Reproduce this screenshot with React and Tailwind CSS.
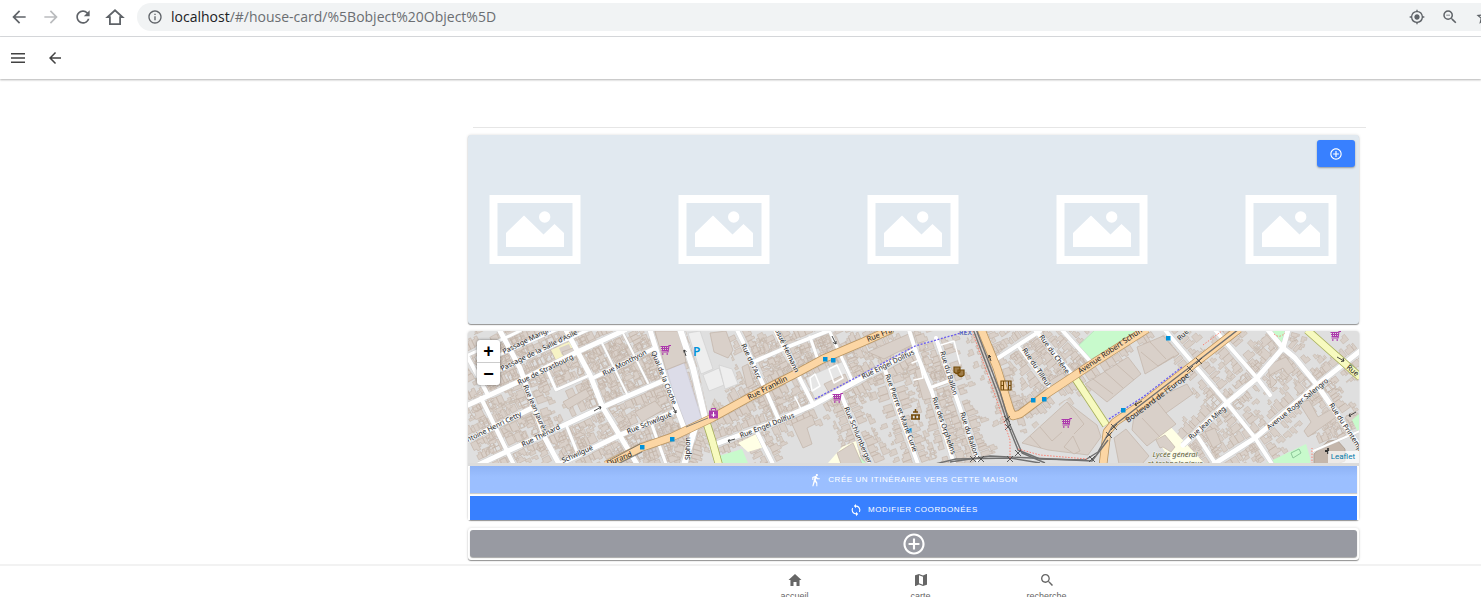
import React from "react";
import {
  MdArrowBack,
  MdArrowForward,
  MdRefresh,
  MdInfoOutline,
  MdGpsFixed,
  MdZoomOut,
  MdStarBorder,
} from "react-icons/md";
import {
  IoMdHome,
  IoMdMap,
  IoMdSearch,
  IoMdWalk,
  IoMdSync,
  IoMdAddCircleOutline,
} from "react-icons/io";

/* Streets: [width, points]. Map units are pixels at the default zoom. */
const STREETS = [
  [5, [[468, 405], [518, 382], [575, 353], [625, 330]]],
  [5, [[499, 329], [520, 368], [545, 438], [559, 464]]],
  [3, [[486, 377], [540, 352], [590, 329]]],
  [3, [[492, 358], [556, 330]]],
  [3, [[466, 356], [520, 331]]],
  [5, [[566, 330], [590, 375], [603, 408], [637, 464]]],
  [4, [[593, 378], [655, 348]]],
  [2, [[602, 343], [627, 394]]],
  [2, [[623, 333], [648, 383]]],
  [5, [[650, 330], [665, 378], [684, 428]]],
  [5, [[478, 465], [508, 451], [558, 428], [605, 406], [665, 380]]],
  [5, [[560, 464], [618, 436], [673, 412]]],
  [5, [[466, 441], [500, 424], [532, 408]]],
  [4, [[481, 398], [508, 453], [514, 465]]],
  [4, [[466, 354], [488, 395]]],
  [3, [[548, 372], [556, 390], [590, 375]]],
  [3, [[567, 427], [577, 452]]],
  [3, [[652, 425], [666, 464]]],
  [6, [[680, 329], [693, 368], [705, 418]]],
  [6, [[695, 428], [684, 465]]],
  [4, [[737, 330], [753, 362], [778, 418]]],
  [4, [[753, 362], [790, 346], [828, 331]]],
  [4, [[775, 330], [797, 373], [813, 404]]],
  [3, [[810, 337], [818, 360]]],
  [3, [[829, 330], [852, 380]]],
  [5, [[713, 445], [767, 425], [813, 405], [857, 381], [915, 350]]],
  [4, [[757, 432], [773, 464]]],
  [4, [[840, 392], [870, 464]]],
  [4, [[885, 370], [900, 415], [918, 464]]],
  [4, [[909, 330], [916, 352], [932, 392], [954, 464]]],
  [4, [[936, 338], [952, 385], [978, 460]]],
  [3, [[932, 387], [951, 380]]],
  [3, [[1018, 346], [1050, 388]]],
  [4, [[1035, 330], [1075, 378]]],
  [4, [[995, 360], [1040, 331]]],
  [4, [[1062, 330], [1090, 361]]],
  [4, [[1165, 330], [1192, 362], [1227, 403], [1255, 438], [1272, 464]]],
  [4, [[1215, 330], [1257, 378], [1270, 395]]],
  [5, [[1183, 445], [1227, 403], [1257, 378], [1283, 348], [1288, 330]]],
  [5, [[1268, 330], [1283, 348], [1295, 358], [1317, 385], [1360, 447]]],
  [5, [[1214, 464], [1255, 438], [1317, 385], [1360, 351]]],
  [4, [[1198, 437], [1215, 463]]],
  [2, [[1313, 451], [1360, 431]]],
];

const PRIMARY = [
  [[606, 465], [640, 448], [672, 437], [712, 418], [750, 397], [797, 373], [823, 359], [863, 342], [892, 329]],
  [[981, 329], [997, 368], [1010, 410], [1013, 416], [1020, 414], [1048, 393], [1095, 362], [1147, 329]],
  [[1103, 465], [1107, 432], [1115, 422], [1145, 402], [1190, 367], [1239, 329]],
];

const SECONDARY = [
  [[706, 421], [712, 440], [719, 465]],
  [[1075, 378], [1106, 425]],
  [[1307, 330], [1360, 377]],
];

const RAILS = [
  [[973, 329], [997, 392], [1008, 425], [1018, 450], [1040, 459], [1085, 460], [1098, 452], [1112, 427], [1143, 403], [1190, 367], [1239, 329]],
  [[976, 329], [1000, 392], [1010, 425], [1022, 453], [1045, 463]],
  [[935, 464], [956, 459], [1010, 458], [1040, 463]],
  [[950, 462], [990, 456], [1092, 461], [1108, 440]],
];

const CROSSINGS = [
  [973, 459], [981, 459], [1010, 459], [1007, 419], [1008, 427],
  [1018, 453], [1092, 459], [1109, 435], [1114, 427], [1190, 369], [1199, 361],
];

const STOPS = [
  [642, 447], [672, 439], [825, 359], [833, 360], [909, 430],
  [1033, 400], [1044, 399], [1123, 410], [1168, 338],
];

const BIG_BUILDINGS = [
  "655,331 680,331 686,362 666,370",
  "562,352 584,344 588,351 566,362",
  "563,402 586,389 590,396 568,409",
  "635,412 655,401 663,410 642,422",
  "710,333 726,331 733,350 728,358 714,352",
  "742,367 748,364 754,384 747,388",
  "792,424 812,415 815,424 807,428 812,444 803,448",
  "824,384 845,374 851,388 832,398",
  "837,453 853,443 862,464 841,464",
  "868,352 913,332 916,343 884,359",
  "915,370 924,367 932,398 923,400",
  "1022,443 1067,402 1097,425 1101,437 1088,455 1048,450",
  "1051,380 1063,373 1070,382 1040,402 1036,397",
  "1085,384 1128,357 1141,374 1107,402",
  "1137,347 1163,336 1179,354 1145,374",
  "1135,408 1187,384 1193,394 1166,413 1176,424 1147,446 1132,430",
  "1114,438 1126,429 1149,456 1142,464 1119,464",
  "1268,365 1286,357 1295,370 1288,375 1283,368 1270,375 1277,382 1271,388",
  "1299,403 1309,400 1318,417 1335,407 1339,415 1308,437 1304,431 1311,422",
  "1205,432 1215,428 1221,443 1213,448",
];

const DARK_BUILDINGS = ["1314,454 1328,441 1337,440 1345,449 1345,461 1337,464 1314,464"];

/* [text, x, y, angle] */
const LABELS = [
  ["Rue de Strasbourg", 519, 385, -26],
  ["Passage Marignan", 504, 354, -26],
  ["Passage de la Salle d'Asile", 502, 371, -26],
  ["Rue Jean Jaurès", 523, 386, 67],
  ["Rue Monthyon", 604, 376, -27],
  ["Antoine Henri Cetty", 464, 444, -26],
  ["Rue Thénard", 523, 447, -26],
  ["Rue Schwilgué", 628, 434, -22],
  ["Schwilgué", 563, 463, -24],
  ["Quai de la Cloche", 651, 352, 68],
  ["Rue de l'Arc", 741, 345, 65],
  ["Josué Heimann", 774, 328, 65],
  ["Rue Engel Dollfus", 741, 438, -21],
  ["Rue Engel Dollfus", 863, 379, -26],
  ["Rue Schlumberger", 844, 408, 67],
  ["Rue Pierre et Marie Curie", 885, 375, 70],
  ["Rue des Orphelins", 932, 398, 71],
  ["Rue du Ballon", 940, 352, 73],
  ["Rue du Ballon", 960, 413, 72],
  ["Rue du Tilleul", 1022, 350, 56],
  ["Rue du Chêne", 1039, 337, 54],
  ["Rue Jean Mieg", 1191, 440, -41],
  ["Avenue Roger Salengro", 1269, 430, -39],
  ["Rue du Printemps", 1329, 405, 57],
  ["Rue", 1180, 341, -45],
];

const MAIN_LABELS = [
  ["Durand", 608, 466, -22],
  ["Rue Franklin", 749, 400, -27],
  ["Rue Franklin", 868, 342, -22],
  ["Avenue Robert Schuman", 1080, 374, -34],
  ["Boulevard de l'Europe", 1128, 423, -37],
  ["Rue", 1346, 368, 40],
];

const toPath = (pts) => "M" + pts.map((p) => p.join(" ")).join("L");

/* Rows of house footprints on both sides of every street. */
function houseRows(first, depth, keep, start) {
  let seed = start;
  const rnd = () => {
    seed = (seed * 16807) % 2147483647;
    return seed / 2147483647;
  };
  let d = "";
  const lines = [...STREETS.map((s) => s[1]), ...PRIMARY.slice(0, 2)];
  lines.forEach((pts) => {
    for (let i = 1; i < pts.length; i++) {
      const [x0, y0] = pts[i - 1];
      const [x1, y1] = pts[i];
      const len = Math.hypot(x1 - x0, y1 - y0);
      const ux = (x1 - x0) / len;
      const uy = (y1 - y0) / len;
      for (const side of [-1, 1]) {
        let t = 3;
        while (t < len - 3) {
          const w = 3 + rnd() * 5;
          const near = first + rnd();
          const far = near + depth + rnd() * 6;
          if (rnd() < keep) {
            const at = (a, o) =>
              `${(x0 + ux * a - uy * o * side).toFixed(1)} ${(y0 + uy * a + ux * o * side).toFixed(1)}`;
            d += `M${at(t, near)}L${at(t + w, near)}L${at(t + w, far)}L${at(t + w * 0.5, far)}L${at(t + w * 0.5, far - 2)}L${at(t, far - 2)}Z`;
          }
          t += w + (rnd() > 0.7 ? 1.5 : 0);
        }
      }
    }
  });
  return d;
}

const BACK_HOUSES = houseRows(15, 2, 0.5, 91);
const HOUSES = houseRows(4, 5, 0.9, 17);

function Cart({ x, y }) {
  return (
    <g transform={`translate(${x} ${y})`} fill="none" stroke="#ac39ac">
      <path d="M11 .5H9L8 7H1.500" strokeWidth="1.200" />
      <path d="M.5 1.500H8.500M1 3.500H8.300M1.500 5.500H8M2.500 1.500V6M4.500 1.500V6M6.500 1.500V6" strokeWidth="1" />
      <path d="M2 9h1.500M6.500 9h1.500" strokeWidth="1.500" />
    </g>
  );
}

function StreetMap() {
  return (
    <svg
      className="block h-full w-full"
      viewBox="468 331 891 132"
      preserveAspectRatio="xMidYMid slice"
      role="img"
      aria-label="Carte"
    >
      <rect x="0" y="0" width="2400" height="900" fill="#dfdfdf" />
      <path d={BACK_HOUSES} fill="#d9d0c9" stroke="#c6b8ad" strokeWidth="0.6" />
      <path d={HOUSES} fill="#d9d0c9" stroke="#c2b3a7" strokeWidth="0.6" />
      <g>
        <polygon points="667,370 684,363 702,420 687,428 672,388" fill="#dcdce8" stroke="#c9c9d8" strokeWidth="0.6" />
        <polygon points="686,331 705,331 715,352 731,357 738,384 716,394 708,414 699,372" fill="#dfdfdf" />
        <polygon points="688,333 700,331 713,369 701,374" fill="#eee" stroke="#ccc" strokeWidth="0.6" />
        <polygon points="703,375 719,368 724,385 709,391" fill="#eee" stroke="#ccc" strokeWidth="0.6" />
        <polygon points="719,365 732,369 738,384 725,389" fill="#eee" stroke="#ccc" strokeWidth="0.6" />
        <polygon points="806,378 846,360 852,379 815,399" fill="#e6e6e6" stroke="#ccc" strokeWidth="0.6" />
        <polygon points="551,350 573,340 577,353 557,362" fill="#f6f3c5" />
        <polygon points="559,348 569,344 572,351 562,355" fill="#d9d0c9" />
        <polygon points="719,456 742,449 748,463 721,464" fill="#c8facc" />
        <polygon points="738,443 758,433 764,447 748,452" fill="#ffffe5" />
        <polygon points="828,463 842,447 856,441 862,463" fill="#ffffe5" />
        <polygon points="855,463 858,456 866,463" fill="#c8facc" />
        <polygon points="1020,442 1066,400 1104,430 1090,459 1045,456" fill="#dfdfdf" />
        <polygon points="1077,347 1095,330 1142,330 1088,361" fill="#c8facc" stroke="#a8dcae" strokeWidth="0.5" />
        <polygon points="1152,432 1167,423 1204,463 1173,464" fill="#ffffe5" />
        <polygon points="1272,331 1286,331 1284,344 1279,342" fill="#c8facc" />
        <polygon points="1352,420 1359,414 1359,434" fill="#c8facc" />
        <polygon points="1264,464 1306,444 1312,464" fill="#c8facc" />
        <polygon points="1291,453 1299,449 1301,453 1293,458" fill="none" stroke="#8dc79a" strokeWidth="1" />
        <polygon points="1310,452 1360,432 1360,464 1310,464" fill="#dfdfdf" />
      </g>
      <g fill="#d9d0c9" stroke="#c2b3a7" strokeWidth="0.7">
        {BIG_BUILDINGS.map((p) => (
          <polygon key={p} points={p} />
        ))}
        <polygon points="1156,440 1165,435 1175,447 1171,452 1163,447 1160,448" />
        <polygon points="1064,447 1073,436 1080,451 1074,454" />
        <path fill="none" d="M1040 427L1052 441L1062 432M1067 402L1084 424L1074 434M1030 436L1041 448M1093 379L1113 394M1104 371L1123 388M1116 364L1134 380M1141 352L1158 366L1174 356M1150 342L1166 359M1142 418L1160 437M1155 399L1166 413" />
      </g>
      <g fill="#c4b6ab" stroke="#a9998c" strokeWidth="0.8">
        {DARK_BUILDINGS.map((p) => (
          <polygon key={p} points={p} />
        ))}
      </g>
      <g fill="none" stroke="#cfcfcf" strokeLinejoin="round">
        {STREETS.map(([w, pts], i) => (
          <path key={i} d={toPath(pts)} strokeWidth={w + 0.8} />
        ))}
      </g>
      <g fill="none" stroke="#fff" strokeLinejoin="round" strokeLinecap="round">
        {STREETS.map(([w, pts], i) => (
          <path key={i} d={toPath(pts)} strokeWidth={w} />
        ))}
        <path d="M810 378L815 374L820 386L812 391ZM829 369L837 365L843 378L834 383ZM912 363L919 360L923 378L914 380M941 345L954 341L960 364M795 397L801 409" strokeWidth="1.5" />
      </g>
      <g fill="none" stroke="#a4ad58" strokeWidth="8" strokeLinejoin="round">
        {SECONDARY.map((pts, i) => (
          <path key={i} d={toPath(pts)} />
        ))}
      </g>
      <g fill="none" stroke="#f7fabf" strokeWidth="6.5" strokeLinejoin="round">
        {SECONDARY.map((pts, i) => (
          <path key={i} d={toPath(pts)} />
        ))}
      </g>
      <g fill="none" stroke="#b99460" strokeWidth="8.500" strokeLinejoin="round">
        {PRIMARY.map((pts, i) => (
          <path key={i} d={toPath(pts)} />
        ))}
      </g>
      <g fill="none" stroke="#fcd6a4" strokeWidth="7" strokeLinejoin="round">
        {PRIMARY.map((pts, i) => (
          <path key={i} d={toPath(pts)} />
        ))}
      </g>
      <path d="M610 468L642 452M610 460L640 444M686 427L708 418" fill="none" stroke="#666" strokeWidth="0.8" />
      <g fill="none" stroke="#707070" strokeWidth="1.4" strokeLinejoin="round">
        {RAILS.map((pts, i) => (
          <path key={i} d={toPath(pts)} />
        ))}
      </g>
      <g stroke="#4c4c4c" strokeWidth="0.9">
        {CROSSINGS.map(([x, y], i) => (
          <path key={i} d={`M${x - 3} ${y - 3}l6 6M${x + 3} ${y - 3}l-6 6`} />
        ))}
      </g>
      <path d="M815 399L857 377L915 346L968 331M1109 419L1143 397L1182 367" fill="none" stroke="#6a5cf0" strokeWidth="1.3" strokeDasharray="2 1.500" />
      <path d="M972 331L995 395L1010 440V460M1018 449L1040 455L1087 459M1203 345L1222 331M1274 334Q1279 339 1285 333M1312 464V448" fill="none" stroke="#fa8072" strokeWidth="1" strokeDasharray="1.500 1.500" />
      <g fill="#0092da">
        {STOPS.map(([x, y], i) => (
          <rect key={i} x={x - 2} y={y - 2} width="4.500" height="4.500" />
        ))}
      </g>
      <Cart x={660} y={345} />
      <Cart x={832} y={393} />
      <Cart x={1061} y={418} />
      <Cart x={1330} y={331} />
      <g>
        <path d="M709 410.500h9v8h-9Z" fill="#ac39ac" />
        <path d="M711.500 410.500v-2h4v2" fill="none" stroke="#ac39ac" />
        <path d="M713.500 412v5M711.500 415h4" stroke="#fff" strokeWidth="1" />
      </g>
      <g fill="none" stroke="#734a08" strokeWidth="1.2">
        <path d="M1001 381h10v9h-10ZM1003.500 381v9M1008.500 381v9M1001 385.500h2M1009 385.500h2" />
        <path d="M954 367h6v5q-3 3-6 0ZM958 370h6v5q-3 3-6 0Z" fill="#a07c48" />
        <path d="M911 419h9M911 415h9M912 415v4M915.500 415v4M919 415v4M913 412h5M915.500 409v3" strokeWidth="1.600" />
      </g>
      <g fill="none" stroke="#333" strokeWidth="0.9">
        <path d="M594 411l7-4m-2.500-.5l2.500.5l-1 2.500M673 407l3 6m0-3v3l-2.500-1.500M728 441l7-2m-5 3.500l-2-1.500l1.500-2M684 350l2 6m-2-3.500v-2.500l2.500 1.500M832 336l4 8m0-3v3l-3-1.500M989 355l2 6m-2.500-3l.5-3l2 2M1135 405l7-4m-5 4.500l-2-.5l1-2.500M1337 357l7 4m-1-3l1 3l-3 .5M1349 416l7-4m-5 4.500l-2-.5l1-2.500" />
        <path d="M1328 448v6M1325 451h4" strokeWidth="1.800" />
      </g>
      <text x="693" y="356" fontFamily="Noto Sans, sans-serif" fontSize="12" fontWeight="600" fill="#0092da">P</text>
      <text x="959" y="335" fontFamily="Noto Sans, sans-serif" fontSize="7" fontWeight="600" fill="#5b6bb8">REX</text>
      <g fontFamily="Noto Sans, sans-serif" fontSize="7" fill="#222" stroke="#f4f4f4" strokeWidth="1.2" strokeOpacity="0.8" strokeLinejoin="round" paintOrder="stroke">
        {LABELS.map(([t, x, y, a], i) => (
          <text key={i} transform={`translate(${x} ${y}) rotate(${a})`}>{t}</text>
        ))}
        <text transform="translate(690 460) rotate(-90)">Siphon</text>
      </g>
      <g fontFamily="Noto Sans, sans-serif" fontSize="7.500" fill="#222">
        {MAIN_LABELS.map(([t, x, y, a], i) => (
          <text key={i} transform={`translate(${x} ${y}) rotate(${a})`}>{t}</text>
        ))}
      </g>
      <g fontFamily="Noto Sans, sans-serif" fontSize="7.500" fontStyle="italic" fill="#5f5f2c" textAnchor="middle" stroke="#f4f4f4" strokeWidth="1" paintOrder="stroke">
        <text x="1175" y="457">Lycée général</text>
        <text x="1175" y="466">et technologique</text>
      </g>
    </svg>
  );
}

function Placeholder() {
  return (
    <svg className="h-[69px] w-[92px] shrink-0" viewBox="0 0 92 69" role="img" aria-label="Photo">
      <path d="M0.500 0H91.500V69H0.500ZM8.500 8V61H83.500V8Z" fill="#fff" fillRule="evenodd" />
      <path d="M17 38L35 20.500L54.500 39.500L65.500 29L75 38V52H17Z" fill="#fff" />
      <circle cx="55.700" cy="22" r="5.700" fill="#fff" />
    </svg>
  );
}

function BrowserBar() {
  return (
    <div className="flex h-[37px] shrink-0 items-start overflow-hidden border-b border-[#d9dbde] bg-white pt-[3px] text-[#5f6368]">
      <div className="flex h-7 shrink-0 items-center gap-3 pl-[9px]">
        <button type="button" aria-label="Page précédente"><MdArrowBack size={20} /></button>
        <button type="button" aria-label="Page suivante" className="text-[#babcbe]"><MdArrowForward size={20} /></button>
        <button type="button" aria-label="Actualiser"><MdRefresh size={20} /></button>
        <button type="button" aria-label="Page d'accueil">
          <svg width="20" height="20" viewBox="0 0 20 20" fill="none" stroke="currentColor" strokeWidth="1.800">
            <path d="M2.500 10.200H4.900V17.100H15.100V10.200H17.500L10 3.300Z" />
          </svg>
        </button>
      </div>
      <div className="ml-3 flex h-7 flex-1 items-center rounded-l-full bg-[#f1f3f4] pl-[10px]">
        <MdInfoOutline size={16} className="shrink-0" />
        <p className="ml-2 flex-1 whitespace-nowrap font-['Open_Sans',sans-serif] text-sm text-[#6b6e72]">
          <span className="text-[#202124]">localhost</span>/#/house-card/%5Bobject%20Object%5D
        </p>
        <div className="-mr-3 flex shrink-0 items-center gap-4">
          <button type="button" aria-label="Position"><MdGpsFixed size={16} /></button>
          <button type="button" aria-label="Zoom"><MdZoomOut size={18} /></button>
          <button type="button" aria-label="Favori"><MdStarBorder size={18} /></button>
        </div>
      </div>
    </div>
  );
}

const TABS = [
  ["accueil", IoMdHome],
  ["carte", IoMdMap],
  ["recherche", IoMdSearch],
];

export default function App() {
  return (
    <div className="flex h-screen flex-col overflow-hidden bg-white font-['Liberation_Sans',sans-serif]">
      <BrowserBar />
      <header className="z-10 flex h-[42px] shrink-0 items-center gap-5 pl-[10px] text-[#424242] shadow-[0_1px_2px_rgba(0,0,0,0.3)]">
        <button type="button" aria-label="Menu">
          <svg width="16" height="16" viewBox="0 0 16 16" fill="none" stroke="currentColor" strokeWidth="1.500">
            <path d="M1 3.800H15M1 8H15M1 12.200H15" />
          </svg>
        </button>
        <button type="button" aria-label="Retour"><MdArrowBack size={18} /></button>
      </header>

      <main className="ml-[360px] min-h-0 flex-1 overflow-hidden pt-12 pr-[122px] pl-[108px]">
        <hr className="-mr-[7px] ml-[5px] border-[#e6e6e6]" />

        <section className="relative mt-[7px] flex h-[189px] items-center justify-between overflow-hidden rounded-[3px] bg-[#e1e9f0] pr-[22px] pl-[21px] shadow-[0_1px_1px_rgba(0,0,0,0.4),0_0_3px_rgba(0,0,0,0.15)]">
          {[0, 1, 2, 3, 4].map((i) => (
            <Placeholder key={i} />
          ))}
          <button
            type="button"
            aria-label="Ajouter une photo"
            className="absolute top-[5px] right-1 flex h-[27px] w-[38px] items-center justify-center rounded-[3px] bg-[#3880ff] text-white shadow-[0_1px_2px_rgba(0,0,0,0.35)]"
          >
            <IoMdAddCircleOutline size={14} />
          </button>
        </section>

        <section className="mt-[7px] rounded-[3px] shadow-[0_1px_1px_rgba(0,0,0,0.4),0_0_3px_rgba(0,0,0,0.15)]">
          <div className="relative h-[132px] overflow-hidden rounded-t-[3px]">
            <StreetMap />
            <div className="absolute top-[9px] left-[9px] w-[23px] overflow-hidden rounded-[3px] bg-white shadow-[0_0_3px_rgba(0,0,0,0.5)]">
              <button type="button" aria-label="Zoom avant" className="flex h-[23px] w-full items-center justify-center border-b border-[#ccc] text-lg leading-none font-bold">+</button>
              <button type="button" aria-label="Zoom arrière" className="flex h-[22px] w-full items-center justify-center text-lg leading-none font-bold">−</button>
            </div>
            <a href="#leaflet" className="absolute right-0 bottom-0 bg-white/70 pr-1 pl-[3px] font-['Roboto',sans-serif] text-[8px] leading-3 text-[#0078a8]">Leaflet</a>
          </div>
          <div className="flex flex-col gap-[3px] bg-linear-to-b from-[#dcdcdc] from-[3px] to-white to-[3px] px-[2px] pt-[3px]">
            <button type="button" disabled className="flex h-[27px] items-center justify-center gap-[5px] bg-linear-to-b from-[#8fb3f5] to-[#9bbfff] to-40% text-[8px] tracking-[0.07em] text-white uppercase shadow-[0_1px_1px_rgba(0,0,0,0.2)]">
              <IoMdWalk size={14} />
              Crée un itinéraire vers cette maison
            </button>
            <button type="button" className="flex h-6 items-center justify-center gap-[5px] bg-[#3880ff] pt-[3px] text-[8px] tracking-[0.07em] text-white uppercase">
              <IoMdSync size={14} />
              Modifier coordonées
            </button>
          </div>
        </section>

        <section className="mt-[8px] rounded-[3px] px-[2px] pt-[2px] pb-[3px] shadow-[0_1px_1px_rgba(0,0,0,0.4),0_0_3px_rgba(0,0,0,0.15)]">
          <button type="button" aria-label="Ajouter" className="flex h-[27px] w-full items-center justify-center rounded-[3px] bg-[#989aa2] text-white shadow-[0_1px_1px_rgba(0,0,0,0.35)]">
            <IoMdAddCircleOutline size={26} />
          </button>
        </section>
      </main>

      <footer className="h-[33px] shrink-0 overflow-hidden border-t-2 border-[#f2f2f2] bg-white pl-[360px]">
        <nav className="flex justify-center">
          {TABS.map(([label, Icon]) => (
            <a key={label} href={`#${label}`} className="flex w-[126px] flex-col items-center gap-[2px] pt-[6px] text-[9px] leading-3 text-[#666]">
              <Icon size={16} />
              {label}
            </a>
          ))}
        </nav>
      </footer>
    </div>
  );
}
